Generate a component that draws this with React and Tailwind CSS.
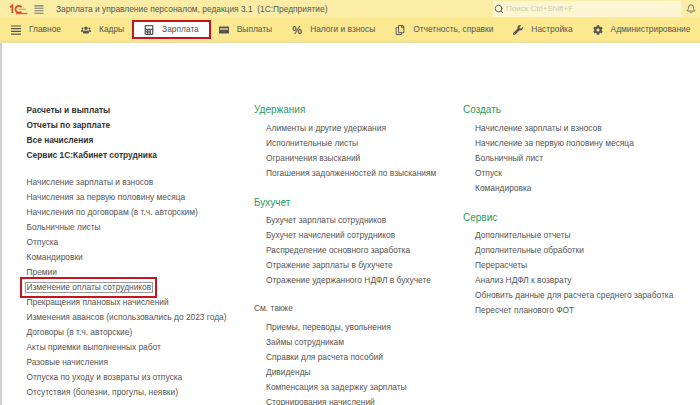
import { Search, Bell } from 'lucide-react'
import { FaUsers, FaCalculator, FaRegCopy, FaWrench, FaCog } from 'react-icons/fa'

const MainIcon = ({ className }) => (
  <svg viewBox="0 0 10 10" className={className} fill="none" stroke="currentColor" strokeWidth="1.2">
    <path d="M0 1h10M0 3.7h10M0 6.4h10M0 9.1h10" />
  </svg>
)

const PayIcon = ({ className }) => (
  <svg viewBox="0 0 10 8" className={className}>
    <rect x="0" y="0.5" width="10" height="7" fill="currentColor" />
    <rect x="1" y="2" width="8" height="2" fill="#b9b08a" />
  </svg>
)

const PercentIcon = ({ className }) => (
  <span className={`text-center text-[11px] font-bold leading-none ${className}`}>%</span>
)

const Logo = () => (
  <svg viewBox="0 0 19 11" className="ml-[9px] h-[11px] w-[19px] shrink-0" fill="none" strokeWidth="1.7">
    <path d="M1 3.2 3.4 1.4V9" stroke="#d8492f" />
    <path d="M12.6 3.2A3.4 3.4 0 1 0 12.4 7.6" stroke="#d8492f" />
    <path d="M7 9.6h11.5" stroke="#e0623a" strokeWidth="1.3" />
    <path d="M10 5.3h7" stroke="#f0a030" strokeWidth="1.2" />
  </svg>
)

const tabs = [
  { label: 'Главное', icon: MainIcon },
  { label: 'Кадры', icon: FaUsers },
  { label: 'Зарплата', icon: FaCalculator, active: true },
  { label: 'Выплаты', icon: PayIcon },
  { label: 'Налоги и взносы', icon: PercentIcon },
  { label: 'Отчетность, справки', icon: FaRegCopy },
  { label: 'Настройка', icon: FaWrench },
  { label: 'Администрирование', icon: FaCog },
]

const bold = ['Расчеты и выплаты', 'Отчеты по зарплате', 'Все начисления', 'Сервис 1С:Кабинет сотрудника']

const accruals = [
  'Начисление зарплаты и взносов',
  'Начисления за первую половину месяца',
  'Начисления по договорам (в т.ч. авторским)',
  'Больничные листы',
  'Отпуска',
  'Командировки',
  'Премии',
  'Изменение оплаты сотрудников',
  'Прекращения плановых начислений',
  'Изменения авансов (использовались до 2023 года)',
  'Договоры (в т.ч. авторские)',
  'Акты приемки выполненных работ',
  'Разовые начисления',
  'Отпуска по уходу и возвраты из отпуска',
  'Отсутствия (болезни, прогулы, неявки)',
]

const middle = [
  { title: 'Удержания', items: ['Алименты и другие удержания', 'Исполнительные листы', 'Ограничения взысканий', 'Погашения задолженностей по взысканиям'] },
  { title: 'Бухучет', items: ['Бухучет зарплаты сотрудников', 'Бухучет начислений сотрудников', 'Распределение основного заработка', 'Отражение зарплаты в бухучете', 'Отражение удержанного НДФЛ в бухучете'] },
]

const seeAlso = ['Приемы, переводы, увольнения', 'Займы сотрудникам', 'Справки для расчета пособий', 'Дивиденды', 'Компенсация за задержку зарплаты', 'Сторнирования начислений']

const right = [
  { title: 'Создать', items: ['Начисление зарплаты и взносов', 'Начисление за первую половину месяца', 'Больничный лист', 'Отпуск', 'Командировка'] },
  { title: 'Сервис', items: ['Дополнительные отчеты', 'Дополнительные обработки', 'Перерасчеты', 'Анализ НДФЛ к возврату', 'Обновить данные для расчета среднего заработка', 'Пересчет планового ФОТ'] },
]

const Row = ({ children, className = '' }) => (
  <div className={`h-[15px] whitespace-nowrap leading-[15px] ${className}`}>{children}</div>
)

const Group = ({ title, items }) => (
  <div className="mb-[13px]">
    <div className="h-[17px] text-[10px] leading-[17px] text-[#2a9a60]">{title}</div>
    <div className="mt-[2.5px] pl-3">
      {items.map((item) => (
        <Row key={item}>{item}</Row>
      ))}
    </div>
  </div>
)

export default function App() {
  return (
    <div className="flex h-[405px] w-[700px] flex-col overflow-hidden bg-white font-['Liberation_Sans',sans-serif] text-[8.4px] text-[#555]">
      <header className="flex h-[18px] shrink-0 items-center bg-[#fbeda5]">
        <Logo />
        <MainIcon className="ml-[6px] h-[9px] w-[10px] text-[#777]" />
        <div className="ml-[12px] text-[8.4px] text-[#555]">Зарплата и управление персоналом, редакция 3.1&nbsp;&nbsp;(1С:Предприятие)</div>
        <div className="ml-auto mr-[5px] flex h-[16px] w-[188px] items-center gap-[2px] bg-[#fdf6d2] pl-[1px]">
          <Search className="h-[10px] w-[10px] text-[#444]" />
          <span className="text-[8px] text-[#cfcbae]">Поиск Ctrl+Shift+F</span>
        </div>
        <Bell className="mr-[4px] h-[10px] w-[10px] text-[#555]" />
      </header>
      <nav className="flex h-[25px] shrink-0 items-stretch border-b-[2px] border-[#ecdfa8] bg-[#fbe88f] pl-px">
        {tabs.map(({ label, icon: Icon, active }) => (
          <div
            key={label}
            className={`flex shrink-0 items-center gap-[8px] px-[10px] ${active ? 'my-[4px] bg-white outline-2 outline-[#c4161c]' : ''}`}
          >
            <Icon className="h-[10px] w-[10px] shrink-0 text-[#555]" />
            <span className="whitespace-nowrap">{label}</span>
          </div>
        ))}
      </nav>
      <main className="flex min-h-0 flex-1 border-l-2 border-[#d0d0d0] pl-[24.5px] pt-[58px]">
        <section className="w-[227.5px] pt-[2px]">
          {bold.map((item) => (
            <Row key={item} className="font-bold text-[#333]">{item}</Row>
          ))}
          <div className="mt-[12px]">
            {accruals.map((item) =>
              item === 'Изменение оплаты сотрудников' ? (
                <div key={item} className="relative h-[15px] w-fit leading-[15px]">
                  {item}
                  <div className="absolute -inset-x-[1.5px] inset-y-[2px] border border-[#999]" />
                  <div className="absolute -bottom-[3px] -left-[7px] -right-[6px] -top-[3px] border-2 border-[#c4161c]" />
                </div>
              ) : (
                <Row key={item}>{item}</Row>
              ),
            )}
          </div>
        </section>
        <section className="w-[209px]">
          {middle.map((group) => (
            <Group key={group.title} {...group} />
          ))}
          <Row>См. также</Row>
          <div className="mt-[4px] pl-3">
            {seeAlso.map((item) => (
              <Row key={item}>{item}</Row>
            ))}
          </div>
        </section>
        <section className="flex-1">
          {right.map((group) => (
            <Group key={group.title} {...group} />
          ))}
        </section>
      </main>
    </div>
  )
}
